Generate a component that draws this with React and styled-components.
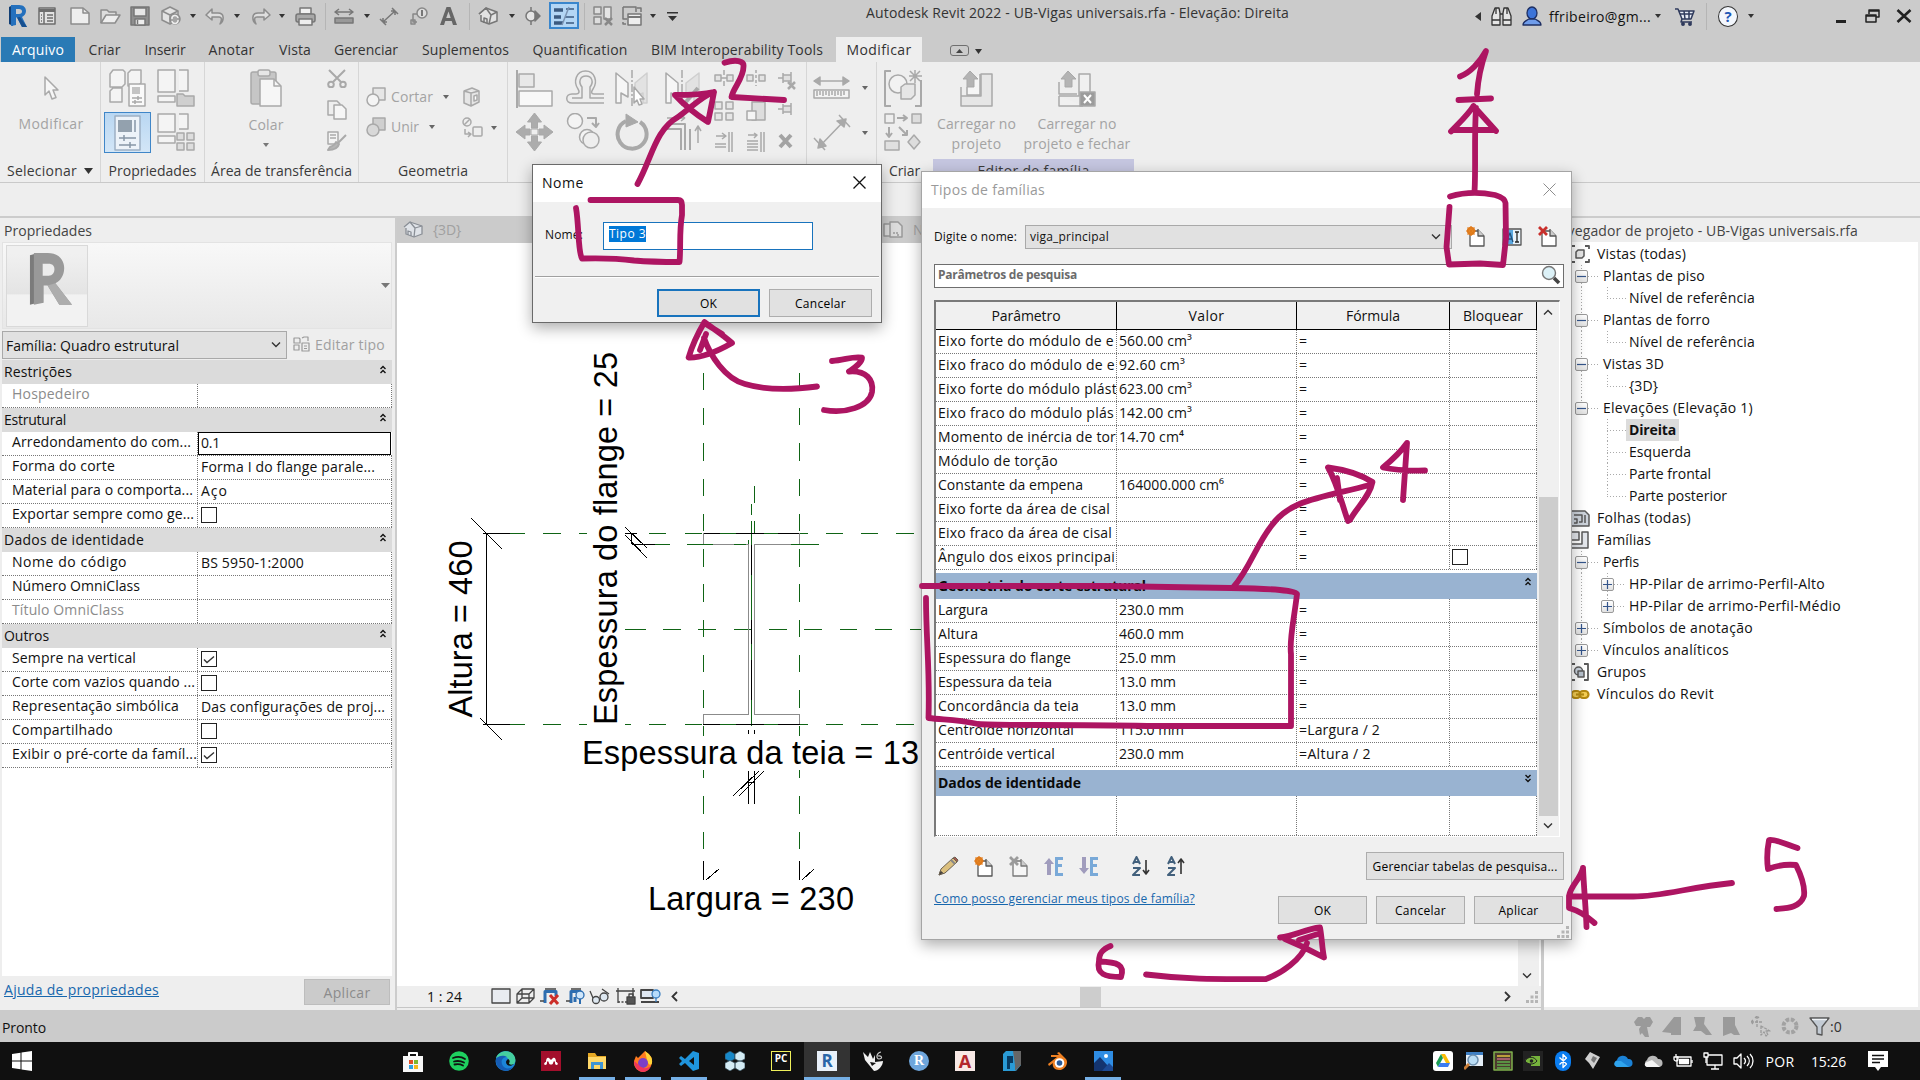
import React, { useLayoutEffect, useRef, useState } from 'react';
import styled, { createGlobalStyle, css } from 'styled-components';

const UI = '"Open Sans", "Noto Sans", "Liberation Sans", sans-serif';

const Global = createGlobalStyle`
  * { box-sizing: border-box; }
  html, body { margin: 0; padding: 0; background: #cbcbcb; }
  body { width: 1920px; height: 1080px; overflow: hidden; font-family: ${UI}; font-size: 14px; color: #111; }
  svg { display: block; flex: none; }
`;

/* ---------- text that tracks to a known column width ---------- */
const Run = styled.span`
  display: inline-block;
  flex: none;
  white-space: nowrap;
`;
function T({ w, children, className }) {
  const ref = useRef(null);
  const [ls, setLs] = useState(0);
  useLayoutEffect(() => {
    if (!w) return;
    const natural = ref.current.getBoundingClientRect().width;
    setLs((w + 1 - natural) / String(children).length);
  }, [w, children]);
  return <Run ref={ref} className={className} style={ls ? { letterSpacing: ls } : undefined}>{children}</Run>;
}

/* ---------- icons ---------- */
const g1 = '#8d8d8d';
const g2 = '#a9a9a9';
const dark = '#5a5a5a';
const S = ({ w, h, children, sw = 1.5, c = g1, f = 'none' }) => (
  <svg width={w} height={h} viewBox={`0 0 ${w} ${h}`} fill={f} stroke={c} strokeWidth={sw} strokeLinejoin="round">{children}</svg>
);
const Tri = ({ w = 6, h = 4, c = '#333' }) => (
  <svg width={w} height={h} viewBox="0 0 6 4" preserveAspectRatio="none"><path d="M0 0h6L3 4z" fill={c} /></svg>
);

const I = {
  revit: <S w={19} h={22} sw={0}><path d="M1 2l4-2v21l-4-2z" fill="#123f75" /><path d="M3 0h8c5 0 7 3 7 6s-2 5-4 6l5 10h-5L9 12.500H8V20l-5 1z" fill="#2470bd" /><path d="M8 4h3c2 0 3 1 3 2.500S13 9 11 9H8z" fill="#cbcbcb" /><path d="M9 12.500l3-.5 7 10h-5z" fill="#174f8f" /></S>,
  win: <S w={18} h={18} c="#6d6d6d"><rect x="1" y="1" width="16" height="16" fill="#e2e2e2" /><path d="M1 3.500h16" strokeWidth="3" /><path d="M6 4v13M9 8h6M9 11h6M9 14h6M3 8h1M3 11h1M3 14h1" /></S>,
  newdoc: <S w={20} h={18}><path d="M1 1h12l6 5v11H1z" fill="#eee" /><path d="M13 1v5h6" /></S>,
  open: <S w={21} h={16}><path d="M1 15V2h6l2 2h7v3" fill="#ddd" /><path d="M1 15L6 7h14l-5 8z" fill="#eee" /></S>,
  save: <S w={20} h={20} c="#777"><path d="M1 1h18v18H1z" fill="#8f8f8f" /><rect x="4" y="2" width="12" height="8" fill="#e6e6e6" /><rect x="5" y="13" width="10" height="6" fill="#eee" /><path d="M7.500 14v4" /></S>,
  cloud: <S w={21} h={20}><path d="M2 5l8-4 8 4v9l-8 4-8-4z" fill="#e3e3e3" /><path d="M2 5l8 4 8-4M10 9v9" /><circle cx="15" cy="13" r="5" fill="#a5a5a5" /><path d="M12 13a3 3 0 0 1 6-1M18 14a3 3 0 0 1-6 1" stroke="#eee" /></S>,
  undo: <S w={20} h={17}><path d="M7 1L1 7l6 5V9h7c3 0 3 3 1 7 4-3 5-11-2-11H7z" fill="#dedede" /></S>,
  redo: <S w={20} h={17}><path d="M13 1l6 6-6 5V9H6c-3 0-3 3-1 7-4-3-5-11 2-11h6z" fill="#dedede" /></S>,
  print: <S w={21} h={19} c="#777"><rect x="5" y="1" width="11" height="6" fill="#f0f0f0" /><rect x="1" y="7" width="19" height="8" rx="2" fill="#a8a8a8" /><rect x="4" y="12" width="13" height="6" fill="#eee" /></S>,
  meas: <S w={20} h={16} c="#777"><path d="M2 4h16M5 1L1 4l4 3M15 1l4 3-4 3" /><rect x="1" y="10" width="18" height="5" fill="#999" /></S>,
  dim: <S w={20} h={19} c="#777"><path d="M4 15L16 4M1 12l6 6M13 1l6 6M4 11v4h4M12 4h4v4" /></S>,
  tag: <S w={18} h={18} c="#888"><circle cx="12" cy="6" r="5" fill="#ddd" /><path d="M7 7H3v8h4M1 13h4v4H1z" /><path d="M12 3v6" stroke="#555" /></S>,
  letterA: <S w={17} h={18} sw={0}><path d="M0 18L6.500 0h4L17 18h-4l-1.300-4H5.300L4 18zm6.200-7h4.500L8.500 4.500z" fill="#666" fillRule="evenodd" /></S>,
  house: <S w={20} h={18} c="#777"><path d="M1 7l7-6 11 4v9l-8 3-8-3V8" fill="#e2e2e2" /><path d="M1 7l7-6 5 7-2 9M13 8l6-3M6 16v-5l3 1v4" /></S>,
  section: <S w={17} h={18} c="#777"><circle cx="7" cy="9" r="5" fill="#e4e4e4" /><path d="M11 4l5 5-5 5zM7 0v4M7 14v4" fill="#777" /></S>,
  thin: <S w={22} h={20} c="#3b5a80"><path d="M1 4h9M1 11h7M1 17h9" strokeWidth="3.500" /><path d="M13 3h8M12 11h9M13 17h8" /><path d="M16 1L9 19" stroke="#7a93b3" /></S>,
  closeh: <S w={21} h={20} c="#888"><rect x="1" y="1" width="7" height="7" fill="#ddd" /><rect x="11" y="1" width="7" height="12" fill="#e4e4e4" /><rect x="1" y="11" width="7" height="7" fill="#ddd" /><path d="M12 12l7 7M19 12l-7 7" strokeWidth="2.500" /></S>,
  switchw: <S w={21} h={20} c="#777"><path d="M1 1h13v5M1 1v12h4" /><rect x="6" y="8" width="13" height="11" fill="#eee" /><path d="M6 11h13" strokeWidth="2" /><path d="M15 2h4v4M1 16v2h3" /></S>,
  custom: <S w={11} h={9} sw={0}><path d="M0 0h11v1.500H0zM1 4h9L5.500 9z" fill="#333" /></S>,
  binoc: <S w={21} h={19} c="#333" sw={1.300}><path d="M4 1h4l1 5v12H1V9zM13 1h4l3 8v9h-8V6z" fill="#e5e5e5" /><path d="M9 7h3M1 13h8M12 13h8M5 1v6M16 1v6" /></S>,
  user: <S w={20} h={20} c="#1e2f63" sw={1.300}><ellipse cx="10" cy="7" rx="5" ry="6" fill="#3d74d8" /><path d="M1 19c0-4 3-4 6-6h6c3 2 6 2 6 6z" fill="#6f9cea" /></S>,
  cart: <S w={21} h={19} c="#2f3a5c"><path d="M1 2h3l4 10h9l3-8H5" fill="#e8ecf6" /><path d="M8 12l-1 3h11M6 7h13M10 4l1 8M15 4v8" /><circle cx="9" cy="17" r="1.200" fill="#2f3a5c" /><circle cx="16" cy="17" r="1.200" fill="#2f3a5c" /></S>,
  restore: <S w={15} h={14} c="#222"><path d="M4 5V1h10v7h-3M4 2h10" /><path d="M1 6h10v7H1zM1 7h10" /></S>,
  close: <S w={16} h={14} c="#222" sw={2.600}><path d="M1.500 1l13 12M14.500 1l-13 12" /></S>,
  cursor: <S w={17} h={27} c={g2}><path d="M2 2v18l4-4 3 8 4-1.500-3-7.500h5z" fill="#f6f6f6" /></S>,
  cubes: <S w={38} h={38} c={g2}><path d="M2 5l3-4h10l2 2v12l-3 3H2zM20 4l3-3h10v13l-3 3H20zM2 22l3-3h9v14H2z" fill="#f4f4f4" /><rect x="21" y="15" width="16" height="22" fill="#fafafa" /><rect x="24" y="18" width="8" height="7" fill="#c4c4c4" stroke="none" /><path d="M24 29h10M24 33h10M30 27v4M27 31v4" /></S>,
  typefold: <S w={38} h={38} c={g2}><path d="M1 1h17v22H1zM22 1h9v21h-9M1 27h17v6H1z" fill="#f4f4f4" /><path d="M20 25h6l2 2h9v10H20z" fill="#cfcfcf" /></S>,
  proppal: <S w={27} h={36} c="#9db0c3"><rect x="1" y="1" width="25" height="34" fill="#edf3f9" /><rect x="4" y="5" width="14" height="12" fill="#93a1ae" stroke="none" /><path d="M21 5v12M5 23h17M5 30h17M10 20v6M16 27v6" stroke="#8797a6" /></S>,
  typegrid: <S w={38} h={38} c={g2}><path d="M1 1h17v18H1zM22 1h9v15h-9M1 23h17v7H1z" fill="#f4f4f4" /><path d="M20 20h7v7h-7zM30 20h7v7h-7zM20 30h7v7h-7zM30 30h7v7h-7z" fill="#ddd" /></S>,
  paste: <S w={33} h={38} c={g2}><rect x="1" y="3" width="25" height="32" rx="2" fill="#c6c6c6" /><rect x="8" y="1" width="12" height="6" rx="2" fill="#e6e6e6" /><path d="M10 10h14l7 7v20H10z" fill="#f6f6f6" /><path d="M24 10v7h7" /></S>,
  scissors: <S w={20} h={19} c={g2} sw={2}><path d="M2 1l12 12M18 1L6 13" /><circle cx="4" cy="15.500" r="2.800" /><circle cx="16" cy="15.500" r="2.800" /></S>,
  copydoc: <S w={20} h={20} c={g2}><path d="M1 1h9l3 3v11H1z" fill="#eee" /><path d="M7 5h8l4 4v10H7z" fill="#f6f6f6" /></S>,
  brush: <S w={20} h={20} c={g2}><path d="M1 1h10v12H1zM3 4h6M3 7h6" fill="#f4f4f4" /><path d="M19 4l-8 8M1 19c6 0 10-2 11-6l-3-2c-1 3-3 4-6 5z" strokeWidth="2" fill="#b5b5b5" /></S>,
  cutg: <S w={20} h={20} c={g2}><rect x="7" y="1" width="12" height="12" fill="#e6e6e6" /><circle cx="7" cy="13" r="6" fill="#f4f4f4" /></S>,
  joing: <S w={20} h={20} c={g2}><rect x="7" y="1" width="12" height="12" fill="#cfcfcf" /><circle cx="7" cy="13" r="6" fill="#d8d8d8" /></S>,
  solid: <S w={20} h={20} c={g2}><path d="M2 4l7 2 8-2v11l-8 4-7-3zM9 6v13M2 4l8-3 7 3" fill="#e6e6e6" /><path d="M12 9l3-1v5l-3 1z" fill="#fff" /></S>,
  geo2: <S w={21} h={21} c={g2}><circle cx="5" cy="5" r="4" /><path d="M2 8l6-6M3 12v5h5M6 15l3 2-3 3" /><rect x="11" y="10" width="9" height="9" rx="1" fill="#eee" /></S>,
  align: <S w={38} h={38} c={g2}><path d="M1 0v38" strokeWidth="2" /><rect x="3" y="4" width="15" height="13" fill="#e8e8e8" /><rect x="3" y="21" width="33" height="15" fill="#f8f8f8" /></S>,
  offset: <S w={39} h={34} c={g2}><path d="M38 24H28c-3 0-3-2-1-5 5-7 2-18-7.500-18S7 12 12 19c2 3 1 5-2 5H6c-7 0-7 9 0 9h32" strokeWidth="1.500" /><path d="M38 28H24V17c4-5 2-11-4-11s-8 6-4 11v11H6" /></S>,
  mirror: <S w={36} h={38} c={g2}><path d="M1 3v30h5V23l7 4V13z" fill="#f6f6f6" /><path d="M32 3v30h-4V23l-8 4V13z" fill="#e2e2e2" stroke="#cfcfcf" /><path d="M17 0v38" strokeDasharray="8 2 2 2" /><path d="M19 17v16l3-3 2 5 3-1-2-5h4z" fill="#fff" /></S>,
  mirror2: <S w={36} h={38} c={g2}><path d="M1 3v30h5V23l7 4V13z" fill="#f6f6f6" /><path d="M34 3v30h-5V23l-8 4V13z" fill="#e2e2e2" stroke="#cfcfcf" /><path d="M17 0v38" strokeDasharray="8 2 2 2" /><path d="M33 18L20 33" strokeWidth="4" /></S>,
  move: <S w={37} h={38} c={g2} sw={1} f="#acacac"><path d="M18.500 0l7 9h-4v6h-6V9h-4zM18.500 38l7-9h-4v-6h-6v6h-4zM0 19l9-7v4h5v6H9v4zM37 19l-9-7v4h-5v6h5v4z" /><rect x="15" y="16" width="7" height="6" fill="#eee" /></S>,
  copy: <S w={35} h={37} c={g2}><circle cx="9" cy="8" r="7.500" fill="#f4f4f4" /><circle cx="21" cy="24" r="7.500" fill="#f4f4f4" /><circle cx="25" cy="27" r="8" fill="#eee" /><path d="M21 5h9v8M26 10l4 4 3-4" strokeWidth="2" /></S>,
  rotate: <S w={35} h={38} c={g2} sw={4}><path d="M11 8A14.500 14.500 0 1 0 25 9" /><path d="M11 1v13l12-5z" fill="#a9a9a9" strokeWidth="1" /></S>,
  trim: <S w={37} h={38} c={g2}><path d="M2 11h18v26M2 16h14v21M25 16v21" strokeWidth="2" /><path d="M2 5h18M20 5l-4-3M20 5l-4 3M33 30V14M30 18l3-5 3 5" /></S>,
  split: <S w={20} h={16} c={g2}><path d="M1 5h6v6H1zM13 5h6v6h-6zM10 0v5M10 11v5M7 8h6" fill="#e4e4e4" /></S>,
  split2: <S w={20} h={16} c={g2}><path d="M1 5h6v6H1zM13 5h6v6h-6z" fill="#e4e4e4" /><path d="M10 0v16" strokeDasharray="3 2" /></S>,
  unpin: <S w={20} h={20} c={g2}><path d="M1 8h5M6 3v10M6 5h8v6H6M14 2v12" fill="#e0e0e0" /><path d="M11 12l7 7M18 12l-7 7" strokeWidth="2.500" /></S>,
  array: <S w={20} h={20} c={g2}><path d="M1 1h7v7H1zM12 1h7v7h-7zM1 12h7v7H1zM12 12h7v7h-7z" fill="#e6e6e6" /></S>,
  scale: <S w={20} h={20} c={g2}><path d="M6 1h13v18H6z" fill="#ddd" /><rect x="1" y="10" width="9" height="9" fill="#f4f4f4" /></S>,
  pin: <S w={18} h={16} c={g2}><path d="M1 8h5M6 3v10M6 5h8v6H6M14 2v12" fill="#e0e0e0" /></S>,
  trim1: <S w={20} h={20} c={g2}><path d="M2 4h9M8 1l4 3-4 3M1 12h11M1 15h11M15 0v20M18 0v20" /></S>,
  trim2: <S w={20} h={20} c={g2}><path d="M2 3h9M8 1l3 2-3 3M1 9h11M1 12h11M1 15h11M1 18h11M15 0v20M18 0v20" /></S>,
  del: <S w={18} h={18} c="#a3a3a3" sw={4}><path d="M3 3l11 12M14 3L3 15" /></S>,
  ruler: <S w={37} h={24} c={g2}><path d="M2 5h33M7 1L1 5l6 4zM30 1l6 4-6 4z" fill={g2} /><rect x="1" y="14" width="35" height="8" fill="#f4f4f4" /><path d="M4 15v5M7 15v4M10 15v5M13 15v4M16 15v5M19 15v4M22 15v5M25 15v4M28 15v5M31 15v4" /></S>,
  aligned: <S w={38} h={38} c={g2}><path d="M6 33L32 6M1 24l11 12M26 1l11 12" /><path d="M5 34l2-9 6 7zM33 5l-9 2 7 6z" fill={g2} /></S>,
  group: <S w={38} h={37} c={g2}><path d="M7 1H1v35h6M31 36h6V10" strokeWidth="2" /><circle cx="14" cy="14" r="9" fill="#f2f2f2" /><path d="M17 17l4-3h10v11l-4 4H17z" fill="#e6e6e6" /><path d="M31 0v13M25 6h13M26 1l10 10M36 1L26 11" /></S>,
  similar: <S w={38} h={38} c={g2}><rect x="1" y="1" width="9" height="9" /><rect x="28" y="1" width="9" height="9" fill="#ddd" /><path d="M13 5h10M19 2l4 3-4 3M5 14v10M2 20l3 4 3-4M15 14l8 8M23 17v5h-5" strokeWidth="2" /><rect x="1" y="28" width="14" height="9" fill="#e0e0e0" /><path d="M30 22l6 7-6 7-6-7z" fill="#ddd" /></S>,
  load: <S w={33} h={37} c={g2}><path d="M1 17v19h31V4H21v22H1" fill="#e6e6e6" /><path d="M7 17v8h13V4" fill="#f6f6f6" /><path d="M10 1l8 8h-4v8h-7V9H3z" fill="#b4b4b4" strokeWidth="1" /></S>,
  loadx: <S w={39} h={37} c={g2}><path d="M1 26v10h24M32 22V4H21v22H1" fill="#f0f0f0" /><path d="M1 12v12h18" /><path d="M10 1l8 8h-4v8h-7V9H3z" fill="#b4b4b4" strokeWidth="1" /><rect x="22" y="22" width="15" height="14" fill="#9c9c9c" /><path d="M26 25l7 8M33 25l-7 8" stroke="#fff" strokeWidth="2" /></S>,
  dnew: <S w={20} h={21} c="#555" sw={1.300}><path d="M4 5h9l5 5v10H4z" fill="#fff" /><path d="M12 3v7h6" fill="#ccc" /><circle cx="5" cy="5" r="3.200" fill="#ffc34a" stroke="#e07b1c" strokeWidth="2" /><path d="M5 0v10M0 5h10M1.500 1.500l7 7M8.500 1.500l-7 7" stroke="#e07b1c" strokeWidth="1.200" /></S>,
  ai: <S w={20} h={18} c="#555" sw={1.300}><rect x="1" y="1" width="18" height="16" fill="#e8f2fb" /><rect x="1" y="2" width="10" height="14" fill="#59a7e0" stroke="none" /><path d="M4 14l4-9 3 9M5 11h5" stroke="#22507c" /><path d="M15 4v10M13 4h4M13 14h4" stroke="#222" /></S>,
  ddel: <S w={20} h={21} c="#555" sw={1.300}><path d="M4 5h9l5 5v10H4z" fill="#fff" /><path d="M12 3v7h6" fill="#ccc" /><path d="M1 1l8 8M9 1L1 9" stroke="#c9302c" strokeWidth="2.800" /></S>,
  ddelg: <S w={20} h={21} c="#777" sw={1.300}><path d="M4 5h9l5 5v10H4z" fill="#f6f6f6" /><path d="M12 3v7h6" fill="#ccc" /><path d="M1 1l8 8M9 1L1 9" stroke="#9b9b9b" strokeWidth="2.800" /></S>,
  mag: <S w={20} h={20} c="#777" sw={1.400}><circle cx="8" cy="8" r="6.500" fill="#dcf1f7" /><path d="M13 13l5 5" stroke="#444" strokeWidth="3.500" /></S>,
  pencil: <S w={21} h={20} c="#6b6152" sw={1}><path d="M1 19l2-6L15 2l4 4L7 17z" fill="#dcc07e" /><path d="M1 19l1.500-4 2.500 2z" fill="#333" /><path d="M15 2l2-1 3 3-1 2z" fill="#a65a52" /><path d="M13 4l4 4" stroke="#888" strokeWidth="2" /></S>,
  up: <S w={20} h={20} sw={0}><path d="M5 2l5 6H7v11H3V8H0z" fill="#a09cbd" /><path d="M11 1h8v3h-5v4h4v3h-4v6h5v3h-8z" fill="#79a9d8" /></S>,
  down: <S w={20} h={20} sw={0}><path d="M5 18l5-6H7V1H3v11H0z" fill="#a09cbd" /><path d="M11 1h8v3h-5v4h4v3h-4v6h5v3h-8z" fill="#79a9d8" /></S>,
  az: <S w={18} h={20} c="#42607c" sw={2}><path d="M1 8L4.500 1 8 8M2.500 6h4M1 12h7l-7 7h7" /><path d="M14 4v14M11 14l3 4 3-4" stroke="#333" strokeWidth="1.600" /></S>,
  za: <S w={18} h={20} c="#42607c" sw={2}><path d="M1 8L4.500 1 8 8M2.500 6h4M1 12h7l-7 7h7" /><path d="M14 18V3M11 7l3-4 3 4" stroke="#333" strokeWidth="1.600" /></S>,
  edit: <S w={17} h={16} c="#999" sw={1.200}><path d="M1 2h5l1 1v4H1zM9 2l2-1h4v4M1 9h5v5H1z" /><rect x="9" y="7" width="7" height="8" /><path d="M11 10h3M11 12.500h3" /></S>,
  tviews: <S w={20} h={18} c={dark}><path d="M5 1H1v16h4M15 1h4v3M19 14v3h-4" strokeWidth="1.800" /><path d="M6 7l2-2h6v6l-2 2H6z" fill="#e8e8e8" /></S>,
  tsheet: <S w={20} h={17} c={dark}><path d="M1 1h14l4 4v11H1z" fill="#cdd3db" /><path d="M4 5h8v7H9M4 9h3v4H4M15 5v8" /></S>,
  tfam: <S w={19} h={18} c={dark}><path d="M1 1h8v8H1zM12 1h6v16H1v-4h11z" fill="#e4e7ec" /></S>,
  tgroup: <S w={19} h={18} c={dark}><path d="M5 1H1v16h4M14 1h4v16h-4" strokeWidth="1.800" /><circle cx="8.500" cy="8" r="4" fill="#ccd5e0" /><path d="M8 8h6v6H8z" fill="#b8c2ce" /></S>,
  tlink: <S w={20} h={11} c="#b58a12" sw={2.200}><rect x="1.500" y="2" width="9" height="7" rx="3.500" fill="#f5cf55" /><rect x="9.500" y="2" width="9" height="7" rx="3.500" fill="#f5cf55" /><path d="M6 5.500h8" /></S>,
  vhouse: <S w={20} h={17} c="#8a8f96" sw={1.300}><path d="M1 6l6-5 12 4v8l-8 3-8-3V7" fill="#dfe3e8" /><path d="M7 1l5 6-1 9M12 7l7-2M5 14v-4l3 1v4" /></S>,
  vsheet: <S w={20} h={19} c="#999"><path d="M1 4h6v12H1zM7 2h8l4 4v11H7z" fill="#dcdcdc" /><path d="M10 13h5v4" strokeDasharray="2 1" /></S>,
  v1: <S w={20} h={17} c="#444" sw={1.300}><rect x="1" y="1" width="18" height="14" fill="#e9ecf1" /></S>,
  v2: <S w={19} h={17} c="#444" sw={1.300}><path d="M1 6h12v9H1zM1 6l5-5h12v9l-5 5M13 6l5-5M6 1v9h12M1 15l5-5" /></S>,
  v3: <S w={21} h={17} c="#2d6db0" sw={3}><path d="M6 15V3.500h11V8" /><path d="M1 13h4M6 1h11" stroke="#444" strokeWidth="1.300" /><path d="M11 7l8 9M19 7l-8 9" stroke="#cc2f2a" strokeWidth="3" /></S>,
  v4: <S w={20} h={17} c="#2d6db0" sw={3}><path d="M6 15V3.500h10M10 14V9" /><path d="M1 13h4M6 1h10" stroke="#444" strokeWidth="1.300" /><circle cx="15" cy="7" r="4" fill="#cfe6fb" strokeWidth="1.300" /><path d="M15 11v5" strokeWidth="2" /></S>,
  v5: <S w={21} h={17} c="#444" sw={1.300}><path d="M1 3l3 7M20 6l-7-5" /><circle cx="7" cy="12" r="3.500" fill="#dde7f0" /><circle cx="15" cy="9" r="4" fill="#dde7f0" /></S>,
  v6: <S w={21} h={17} c="#444" sw={1.300}><path d="M1 3h19M3 0v15M18 0v8" /><path d="M3 14h9" strokeDasharray="2 1.500" /><rect x="12" y="9" width="8" height="7" fill="#555" /><path d="M14 9V6h4v3" /></S>,
  v7: <S w={21} h={17} c="#444" sw={1.300}><path d="M1 2h12v8H1zM1 14h18" fill="#dfe7f1" strokeWidth="1.800" /><circle cx="16" cy="6" r="4" fill="#b7dcfb" stroke="#3b7fc0" /><path d="M16 10v4" stroke="#3b7fc0" /></S>,
  s1: <S w={20} h={21} sw={0}><path d="M1 6l4-5h4l2 2 2-2h4l3 5-3 5h-3l2 10h-4l-3-4-2 2-1-6 2-3H3z" fill="#9a9a9a" /></S>,
  s2: <S w={20} h={21} sw={0}><path d="M0 16L12 1h7v18H9V17z" fill="#9a9a9a" /></S>,
  s3: <S w={20} h={21} sw={0}><path d="M2 1h11l-1 7 8 11h-6l-5-4H1l3-5z" fill="#9a9a9a" /></S>,
  s4: <S w={20} h={21} sw={0}><path d="M2 1h12v8l5 10h-6l-3-2-8 3z" fill="#9a9a9a" /></S>,
  s5: <S w={21} h={21} c="#9a9a9a" sw={1.300}><path d="M6 0v12M0 6h12M4 2l2-2 2 2M2 4L0 6l2 2M10 10v9l3-3 2 4 2-1-2-4h4z" strokeDasharray="3 1" /></S>,
  s6: <S w={18} h={18} c="#a2a2a2" sw={4}><circle cx="9" cy="9" r="6.500" strokeDasharray="3.600 1.500" /></S>,
  funnel: <S w={21} h={20} c="#555" sw={1.300}><path d="M1 2h19l-7 9v8l-5-1v-7z" fill="#c3cbd4" /><path d="M3 3.500h15" stroke="#f1f4f7" /></S>,
};

const taskIcons = {
  store: <S w={20} h={21} sw={0}><path d="M6 6V2h8v4" fill="none" stroke="#fff" strokeWidth="2" /><path d="M0 5h20v16H0z" fill="#f7f7f7" /><path d="M6 9h4v4H6z" fill="#e14f26" /><path d="M11 9h4v4h-4z" fill="#7db72f" /><path d="M6 14h4v4H6z" fill="#2fa0e0" /><path d="M11 14h4v4h-4z" fill="#f5b81c" /></S>,
  spotify: <S w={20} h={20} sw={0}><circle cx="10" cy="10" r="9.800" fill="#1ed05f" /><path d="M4 7c4-1.500 9-1 12 1M5 10.500c4-1 7-.500 10 1M5.500 13.500c3-.700 6-.4 8.500 1" fill="none" stroke="#111" strokeWidth="1.800" strokeLinecap="round" /></S>,
  edge: <S w={21} h={20} sw={0}><circle cx="10.500" cy="10" r="10" fill="#1b84d8" /><path d="M1 7C3 1 10-1 15 1c5 2 7 8 4 12-3 2-7 1-5-2 1-4-5-8-13-4z" fill="#45cfa0" /><path d="M1 8c3-4 8-4 11-2-5 0-7 5-4 9 2 3 6 3 10 1-5 7-18 4-17-8z" fill="#155cb4" /><path d="M13 8c2 1 2 3 1 4 0 2 3 2 5 1-3 3-8 2-8-2 0-1 1-2 2-3z" fill="#101010" /></S>,
  mendeley: <S w={20} h={20} sw={0}><rect width="20" height="20" fill="#a30f2c" /><path d="M4 14c-2-1 0-3 1-3 0-3 1-5 3-4l2 2 2-2c2-1 3 1 3 4 1 0 3 2 1 3-2 0-2-1-2-3l-1-1-1 2c0 2-4 2-4 0l-1-2-1 1c0 2 0 3-2 3z" fill="#fff" /></S>,
  explorer: <S w={20} h={18} sw={0}><path d="M1 1h7l2 3h9v13H1z" fill="#e5a824" /><path d="M1 5h18v12H1z" fill="#ffd869" /><path d="M4 17v-7h12v7h-3v-4H7v4z" fill="#3f94d4" /></S>,
  firefox: <S w={20} h={21} sw={0}><path d="M12 0c4 3 8 6 7 12-1 5-5 9-9 9S0 17 1 10l2-5 2 2z" fill="#ff7a1f" /><path d="M12 0c4 3 8 6 7 12-1 3-4 2-5-3z" fill="#ffd53a" /><circle cx="10" cy="12" r="5" fill="#7b3fc7" /><path d="M1 10c0 7 5 11 9 11 3 0 7-3 8-6-4 3-9 3-12-1z" fill="#f0355b" /></S>,
  vscode: <S w={20} h={20} sw={0}><path d="M14 0l6 2v16l-6 2L6 12l-4 3-2-2 3-3-3-3 2-2 4 3zm1 6l-5 4 5 4z" fill="#1f95dd" fillRule="evenodd" /></S>,
  cubes3: <S w={20} h={20} c="#2c4450" sw={0.7}><path d="M0 3l5-3 5 3v5l-5 2.500L0 8z" fill="#1889c9" /><path d="M10 3l5-3 5 3v5l-5 2.500L10 8zM0 12l5-2.500 5 2.500v5l-5 3-5-3zM10 12l5-2.500 5 2.500v5l-5 3-5-3z" fill="#d4ecf5" /></S>,
  rhino: <S w={20} h={20} sw={0}><path d="M0 1l5 5 2-5 3 7 2-4v7l8-1c0 5-5 10-9 10L2 9z" fill="#f1f1f1" /><path d="M7 11l6 1-4 3z" fill="#111" /><path d="M18 1c-5 1-5 7-2 7 4 0 3-4-1-3" fill="none" stroke="#ccc" strokeWidth="1.200" /></S>,
  navis: <S w={20} h={20} sw={0}><path d="M2 3l3-3h15v14l-5 6H2z" fill="#2a9bd6" /><path d="M12 0h8v14l-6 6v-6z" fill="#666" /><path d="M6 5h6v7H9v6H6z" fill="#063b63" /></S>,
  blender: <S w={20} h={19} sw={0}><path d="M1 12l9-7H4V3h8L10 1l2-1 7 7c3 4-1 11-7 11-5 0-7-4-6-7l-4 3z" fill="#ee8022" /><circle cx="12.500" cy="11" r="4.800" fill="#fff" /><circle cx="12.500" cy="11" r="2.800" fill="#2a5b99" /></S>,
  photos: <S w={19} h={20} sw={0}><rect width="19" height="20" fill="#2f8de4" /><path d="M0 20V12l6-6 8 9 5 5z" fill="#14346e" /><path d="M8 20l7-8 4 4v4z" fill="#1d4a94" /><circle cx="12" cy="5" r="2" fill="#fff" /></S>,
  gdrive: <S w={20} h={20} sw={0}><rect width="20" height="20" rx="3" fill="#fff" /><path d="M8 3h4l5 9h-4z" fill="#fbbc05" /><path d="M8 3l2 4-5 9-2-4z" fill="#1a9c52" /><path d="M7 12h10l-2 4H5z" fill="#3c7cf0" /></S>,
  search: <S w={19} h={20} sw={0}><rect x="2" y="1" width="17" height="14" fill="#e5eef7" /><rect x="2" y="1" width="17" height="3" fill="#3e7fc4" /><circle cx="9" cy="9" r="5" fill="#b9dcf5" stroke="#6d8fae" strokeWidth="1.500" /><path d="M5 13l-5 5" stroke="#c87c36" strokeWidth="3" /></S>,
  bars: <S w={20} h={20} sw={0}><rect x="1" y="1" width="18" height="18" fill="#4c3a2e" stroke="#7fb04c" strokeWidth="1.500" /><path d="M4 5h13" stroke="#e0c040" strokeWidth="1.500" /><path d="M4 8h13" stroke="#c06a80" strokeWidth="1.500" /><path d="M4 11h13M4 14h13M4 17h13" stroke="#5fae4c" strokeWidth="1.500" /></S>,
  nvidia: <S w={20} h={20} sw={0}><rect width="20" height="20" fill="#222" /><path d="M8 5h9v10H8z" fill="#76b33c" /><path d="M2 10c3-5 9-5 12 0-3 4-9 4-12 0z" fill="#76b33c" stroke="#222" strokeWidth="1" /><circle cx="8.500" cy="10" r="1.800" fill="#222" /></S>,
  bt: <S w={16} h={20} c="#fff" sw={1.300}><rect width="16" height="20" rx="8" fill="#0a7df0" stroke="none" /><path d="M4.500 6.500l7 6.500-3.500 3.500V3.500L11.500 7l-7 6.500" /></S>,
  pen: <S w={16} h={18} sw={0}><path d="M5 0l10 5-7 12-4-6-4-4z" fill="#cfcfcf" /><path d="M8 4l4 2-3 5-3-3z" fill="#777" /></S>,
  onedrive: <S w={20} h={14} sw={0}><path d="M4 13a4 4 0 0 1 0-7 6 6 0 0 1 11-1 4 4 0 0 1 1 8z" fill="#1b82d6" /><path d="M8 7l8 6H4c-3-1-4-4-1-6z" fill="#2fa4ee" /></S>,
  cloudw: <S w={20} h={14} sw={0}><path d="M4 13a4 4 0 0 1 0-7 6 6 0 0 1 11-1 4 4 0 0 1 1 8z" fill="#b9b9b9" /><path d="M9 6l8 7H4c-3-1-3-4 0-5z" fill="#f5f5f5" /></S>,
  batt: <S w={21} h={16} c="#fff" sw={1.300}><rect x="4" y="4" width="14" height="9" /><rect x="6.500" y="6.500" width="9" height="4" fill="#fff" /><path d="M19 7v3M3 1v3M1 4h4v2a2 2 0 0 1-4 0z" /></S>,
  net: <S w={20} h={18} c="#fff" sw={1.300}><path d="M4 3h15v10H4zM8 17h8M12 13v4" /><path d="M1 1h4v4H1zM3 5v6" fill="#101010" /></S>,
  vol: <S w={21} h={16} c="#fff" sw={1.300}><path d="M1 5h3l4-4v14l-4-4H1zM11 5c2 2 2 4 0 6M14 3c3 3 3 7 0 10M17 1c4 4 4 10 0 14" /></S>,
  notif: <S w={20} h={20} sw={0}><path d="M0 0h20v16h-7l-3 4-3-4H0z" fill="#fff" /><path d="M4 4.500h12M4 8h12M4 11.500h8" stroke="#111" strokeWidth="1.500" /></S>,
  start: <S w={20} h={20} sw={0}><path d="M0 3l8.500-1.300v7.800H0zM9.500 1.500L20 0v9.500H9.500zM0 10.500h8.500v7.800L0 17zM9.500 10.500H20V20L9.500 18.500z" fill="#fff" /></S>,
};

/* ---------- frame ---------- */
const Screen = styled.div`
  position: relative; width: 1920px; height: 1080px; overflow: hidden;
  display: flex; flex-direction: column; background: #eee;
`;
const TitleBar = styled.div`height: 37px; flex: none; background: #cbcbcb; display: flex; align-items: flex-start;`;
const Slot = styled.div`flex: none; margin-left: ${p => p.$gap || 0}px; height: 32px; display: flex; align-items: center;`;
const Split = styled.div`flex: none; margin: 3px 0 0 ${p => p.$gap}px; width: 1px; height: 27px; background: #b5b5b5;`;
const ThinBtn = styled.div`
  flex: none; margin: 2px 0 0 8px; width: 30px; height: 27px; background: #b3d6f5; border: 2px solid #3a86cc;
  display: flex; align-items: center; justify-content: center;
`;
const WinTitle = styled.div`flex: none; height: 26px; line-height: 26px; margin-left: ${p => p.$gap}px; color: #333;`;
const HelpDot = styled.div`
  flex: none; width: 20px; height: 21px; border: 1.500px solid #333; border-radius: 50%; background: #f3f7fd;
  color: #1f57b5; font-weight: 700; font-size: 15px; line-height: 18px; text-align: center;
`;

const TabBar = styled.div`height: 25px; flex: none; background: #cbcbcb; display: flex; padding-left: 1px;`;
const Tab = styled.div`
  flex: none; width: ${p => p.$w}px; display: flex; align-items: center; justify-content: center; padding-bottom: 1px;
  color: #333;
  ${p => p.$file && css`background: #2a7ab5; color: #fff;`}
  ${p => p.$active && css`background: #eee;`}
`;
const TabToggle = styled.div`
  width: 19px; height: 11px; border: 1.500px solid #6f6f6f; border-radius: 3px; margin: 8px 6px 0 28px; display: flex;
  align-items: center; justify-content: center;
`;
const TabArrow = styled.div`padding-top: 12px;`;
const Ribbon = styled.div`height: 121px; flex: none; background: #eee; border-bottom: 1px solid #c9c9c9; display: flex;`;
const Panel = styled.div`
  flex: none; width: ${p => p.$w}px; border-right: 1px solid ${p => (p.$open ? 'transparent' : '#d6d6d6')};
  display: flex; flex-direction: column;
`;
const PanelBody = styled.div`height: 97px; display: flex; padding: ${p => p.$pad || '7px 0 0'};`;
const PanelName = styled.div`
  height: 23px; display: flex; align-items: center; justify-content: center; gap: 7px; color: #3a3a3a;
  background: ${p => p.$bg || 'transparent'};
`;
const Col = styled.div`display: flex; flex-direction: column; align-items: ${p => p.$align || 'center'}; flex: none; width: ${p => p.$w}px; gap: ${p => p.$gap || 0}px; padding-top: ${p => p.$top || 0}px;`;
const Dim = styled.div`color: #a3a3a3; line-height: 20px; white-space: nowrap; display: flex; align-items: center; gap: ${p => p.$gap || 0}px;`;
const Lines = styled.div`color: #a3a3a3; line-height: 20px; display: flex; flex-direction: column; align-items: center;`;
const IconGrid = styled.div`display: grid; grid-template-columns: repeat(${p => p.$n}, ${p => p.$c}px); grid-auto-rows: ${p => p.$r}px; flex: none;`;
const PalBtn = styled.div`
  width: 47px; height: 41px; margin: -1px 0 0 -4px; border: 1px solid #3f86c8; display: flex; align-items: center; justify-content: center;
  background: linear-gradient(#b9d7f2, #d3e6f7);
`;
const Options = styled.div`height: 33px; flex: none; background: #eee;`;

/* ---------- body ---------- */
const Body = styled.div`height: 794px; flex: none; display: flex; background: #eee;`;
const Props = styled.div`width: 395px; flex: none; display: flex; flex-direction: column; border-top: 2px solid #ccc; padding: 0 3px 0 2px;`;
const PalHead = styled.div`height: 24px; flex: none; line-height: 25px; color: #444; padding-left: ${p => p.$pad}px;`;
const TypeBox = styled.div`
  height: 87px; flex: none; border: 1px solid #e3e3e3; background: linear-gradient(#f8f8f8, #e8e8e8);
  display: flex; align-items: center; justify-content: space-between; padding: 0 1px 0 3px;
`;
const Thumb = styled.div`
  width: 82px; height: 82px; border: 1px solid #d9d9d9; display: flex; justify-content: center; padding: 7px 0 0 7px;
  background: linear-gradient(#f0f0f0 0 10%, #e4e4e4 60%, #f2f2f2 61%);
`;
const FamRow = styled.div`height: 31px; flex: none; display: flex; align-items: flex-start; padding-top: 2px;`;
const FamCombo = styled.div`
  width: 285px; height: 28px; border: 1px solid #a9a9a9; background: #e1e1e1; display: flex; align-items: center;
  justify-content: space-between; padding: 0 5px 0 3px;
`;
const EditType = styled.div`height: 26px; margin-left: 6px; display: flex; align-items: center; gap: 5px; color: #a0a0a0;`;
const Grid = styled.div`height: 616px; flex: none; background: #fff; overflow: hidden;`;
const GHead = styled.div`
  height: 24px; background: #dbdbdb; display: flex; justify-content: space-between; align-items: center; padding: 0 6px 1px 2px;
  & > svg { margin-bottom: 5px; }
`;
const GRow = styled.div`height: 24px; display: flex; border-bottom: 1px dotted #777; color: ${p => (p.$off ? '#8b8b8b' : '#111')};`;
const GName = styled.div`width: 196px; border-right: 1px dotted #777; padding-left: 10px; line-height: 20px; overflow: hidden;`;
const GVal = styled.div`
  flex: 1; padding: 0 0 1px 3px; line-height: 20px; display: flex; align-items: center; border-right: 1px dotted #777;
  ${p => p.$edit && css`border: 1px solid #000; padding: 0 0 1px 2px; margin-right: 1px;`}
`;
const Check = styled.div`width: 16px; height: 16px; border: 1px solid #222; background: #fff; margin-top: ${p => p.$mt || 0}px;`;
const HelpBar = styled.div`flex: 1; display: flex; justify-content: space-between; padding: 3px 2px 0 2px;`;
const Link = styled.div`color: #1767ad; line-height: 22px; & > span { text-decoration: underline; }`;
const ApplyOff = styled.div`width: 86px; height: 26px; background: #cbcbcb; border: 1px solid #bdbdbd; color: #8c8c8c; display: flex; align-items: center; justify-content: center;`;

const Center = styled.div`width: 1149px; flex: none; display: flex; flex-direction: column; border-left: 2px solid #ccc; border-right: 3px solid #ccc;`;
const DocTabs = styled.div`height: 27px; flex: none; background: #cbcbcb; display: flex; align-items: center; color: #a0a0a0; padding-left: 6px;`;
const DocTab = styled.div`display: flex; align-items: center; gap: 10px; width: ${p => p.$w}px; overflow: hidden;`;
const CanvasRow = styled.div`height: 743px; flex: none; display: flex; background: #fff;`;
const VScroll = styled.div`width: 21px; background: #efefef; display: flex; align-items: flex-end; justify-content: center; padding: 0 3px 7px 0;`;
const ViewBar = styled.div`height: 22px; flex: none; background: #eee; border-bottom: 1px solid #c6c6c6; display: flex; align-items: center; padding-left: 30px;`;
const ViewIcons = styled.div`display: flex; gap: 4.500px; margin-left: 29px; align-items: center; width: 180px;`;
const HThumb = styled.div`width: 21px; height: 20px; background: #cdcdcd; margin-left: 402px;`;

const Browser = styled.div`flex: 1; border-top: 2px solid #ccc; display: flex; flex-direction: column; padding: 0 2px 3px 0; background: #eee;`;
const Tree = styled.div`flex: 1; background: #fff; padding: 1px 0 0 2px;`;
const TRow = styled.div`height: 22px; display: flex; align-items: center;`;
const Rail = styled.div`
  flex: none; align-self: flex-start; width: 1px; margin: 0 -1px 0 ${p => p.$ml}px; height: ${p => (p.$run === 'end' ? 11 : 22)}px;
  background: ${p => (p.$run ? 'repeating-linear-gradient(#aaa 0 1px, transparent 1px 3px)' : 'transparent')};
`;
const Dash = styled.div`height: 1px; width: ${p => p.$w}px; background: repeating-linear-gradient(90deg, #aaa 0 1px, transparent 1px 3px); flex: none;`;
const Box = styled.div`
  width: 13px; height: 13px; border: 1px solid #9a9a9a; border-radius: 2px; background: linear-gradient(#fff, #e2e2e2);
  margin-left: -6px; flex: none; display: flex; align-items: center; justify-content: center; position: relative;
`;
const TLabel = styled.div`
  line-height: 22px; padding: 0 3px; height: 22px; flex: none;
  ${p => p.$on && css`background: #dcdcdc; font-weight: 700;`}
`;
const IconCell = styled.div`width: 48px; padding-left: 24px; flex: none; display: flex;`;

const Status = styled.div`height: 32px; flex: none; background: #cbcbcb; display: flex; align-items: center; padding: 2px 78px 0 2px; justify-content: space-between;`;
const StatusIcons = styled.div`display: flex; gap: 9.500px; align-items: center; color: #333; margin-top: -2px;`;
const Count = styled.div`margin-left: -9px;`;
const Taskbar = styled.div`height: 38px; flex: none; background: #101010; display: flex; color: #fff;`;
const StartBtn = styled.div`width: 44px; flex: none; display: flex; align-items: center; justify-content: center;`;
const AppStrip = styled.div`display: grid; grid-template-columns: repeat(16, 36px); column-gap: 10px; margin-left: 351px;`;
const AppCell = styled.div`
  height: 38px; display: flex; align-items: center; justify-content: center;
  background: ${p => (p.$act ? '#333' : 'transparent')}; margin: 0 ${p => (p.$act ? -5 : 0)}px;
  border-bottom: 3px solid ${p => (p.$run ? '#76b0e6' : 'transparent')}; padding-top: 3px;
`;
const Badge = styled.div`
  width: 20px; height: 20px; background: ${p => p.$bg}; color: ${p => p.$c}; border: ${p => p.$b || '0'}; border-radius: ${p => p.$r || 0};
  font: 700 ${p => p.$s || 15}px/${p => p.$lh || 20}px ${p => p.$f || UI}; text-align: center;
`;
const Tray = styled.div`display: flex; margin-left: 307px;`;
const TrayCell = styled.div`width: ${p => p.$w || 30}px; flex: none; display: flex; align-items: center; justify-content: center; height: 38px;`;

/* ---------- dialogs ---------- */
const Dialog = styled.div`
  position: absolute; left: ${p => p.$x}px; top: ${p => p.$y}px; width: ${p => p.$w}px; height: ${p => p.$h}px;
  background: #f0f0f0; border: 1px solid ${p => p.$bd}; box-shadow: 0 5px 14px rgba(0,0,0,.32); display: flex; flex-direction: column;
`;
const DTitle = styled.div`
  height: ${p => p.$h}px; flex: none; background: #fff; display: flex; align-items: center; justify-content: space-between;
  padding: 0 ${p => p.$pr}px 2px ${p => p.$pl}px; color: ${p => p.$c};
`;
const Btn = styled.div`
  width: ${p => p.$w}px; height: 28px; flex: none; background: #e1e1e1; border: 1px solid #adadad; display: flex; align-items: center;
  justify-content: center; font-size: 12px; color: #000;
  ${p => p.$def && css`border: 2px solid #1873bd;`}
`;
const NRow = styled.div`display: flex; align-items: center; height: 28px; margin-top: 20px; padding-left: 12px; font-size: 12px; & > span { margin-bottom: 3px; }`;
const NInput = styled.div`width: 210px; height: 28px; border: 1px solid #1873bd; background: #fff; margin-left: 20px; padding: 2px 0 0 5px;`;
const Sel = styled.span`display: inline-block; background: #0078d7; color: #fff; height: 16px; line-height: 16px;`;
const NLine = styled.div`height: 2px; background: #a0a0a0; border-bottom: 1px solid #fff; margin: 26px 2px 0;`;
const NBtns = styled.div`display: flex; gap: 9px; justify-content: flex-end; padding: 11px 9px 0 0;`;

const FRow = styled.div`display: flex; align-items: center; height: 25px; margin: 16px 0 0 12px; font-size: 12px;`;
const FCombo = styled.div`width: 427px; height: 24px; margin-left: 8px; border: 1px solid #a9a9a9; background: #e1e1e1; display: flex; align-items: center; justify-content: space-between; padding: 0 10px 0 4px;`;
const FIcons = styled.div`display: flex; gap: 16px; margin-left: 14px; align-items: center;`;
const Search = styled.div`
  width: 630px; height: 24px; margin: 15px 0 0 12px; border: 1px solid #6e6e6e; background: #fff; display: flex; justify-content: space-between;
  padding: 0 2px 3px 3px; align-items: center; font-size: 12px; font-weight: 700; color: #6b6b6b;
`;
const TableWrap = styled.div`
  width: 626px; height: 537px; margin: 12px 0 0 12px; flex: none; border: 2px solid #7a7a7a; border-width: 2px 1px 1px 2px; border-right-color: #fff; border-bottom-color: #fff;
  display: flex; background: #fff;
`;
const Table = styled.div`width: 601px; flex: none;`;
const row4 = css`display: grid; grid-template-columns: 181px 180px 153px 87px;`;
const THead = styled.div`${row4} height: 28px; background: #f0f0f0; border-bottom: 1px solid #000; & > div { border-right: 1px solid #000; text-align: center; line-height: 27px; overflow: hidden; }`;
const TBRow = styled.div`
  ${row4} height: ${p => p.$h || 24}px; border-bottom: 1px dotted #777;
  & > div { border-right: 1px dotted #777; line-height: 22px; padding-left: 2px; overflow: hidden; white-space: nowrap; }
`;
const Band = styled.div`
  height: 26px; margin-top: 3px; background: #99b3d1; font-weight: 700; color: #0a0a0a; display: flex; align-items: center;
  justify-content: space-between; padding: 0 6px 2px 2px; & > svg { margin-bottom: 8px; }
`;
const TScroll = styled.div`flex: 1; background: #f0f0f0; display: flex; flex-direction: column; align-items: center; padding: 7px 1px 7px;`;
const TThumb = styled.div`width: 19px; height: 319px; background: #cdcdcd; margin: auto 0 7px;`;
const Tools = styled.div`display: flex; align-items: center; margin: 15px 0 0 16px; height: 28px; flex: none;`;
const ToolIc = styled.div`margin-right: ${p => p.$r}px;`;
const DLink = styled(Link)`font-size: 12px; margin: 9px 0 0 12px; height: 14px; line-height: 20px;`;
const DBtns = styled.div`display: flex; gap: 9px; justify-content: flex-end; padding-right: 8px; margin-top: -7px;`;
const Grip = styled.div`display: flex; justify-content: flex-end; padding: 2px 2px 0 0;`;

const Ink = styled.svg`position: absolute; left: 0; top: 0; pointer-events: none;`;

const Chev = ({ down, c = '#333' }) => (
  <svg width="10" height="6" viewBox="0 0 10 6" fill="none" stroke={c} strokeWidth="1.400"><path d={down ? 'M1 .500l4 4 4-4' : 'M1 5.500l4-4 4 4'} /></svg>
);
const Dbl = ({ down }) => (
  <svg width="6" height="9" viewBox="0 0 6 9" fill="none" stroke="#111" strokeWidth="1.400"><path d={down ? 'M.500 1l2.500 2.500L5.500 1M.500 5l2.500 2.500L5.500 5' : 'M.500 4L3 1.500 5.500 4M.500 8L3 5.500 5.500 8'} /></svg>
);
const GripDots = () => (
  <svg width="12" height="12" viewBox="0 0 12 12" fill="#b5b5b5"><path d="M9 0h3v3H9zM4.500 4.500h3v3h-3zM9 4.500h3v3H9zM0 9h3v3H0zM4.500 9h3v3h-3zM9 9h3v3H9z" /></svg>
);

/* ---------- data ---------- */
const quick = [
  [8, I.revit], [11, I.win], [14, I.newdoc], [10, I.open], [9, I.save], [10, I.cloud], [9, <Tri />], [9, I.undo], [9, <Tri />],
  [11, I.redo], [8, <Tri />], [10, I.print], [9, 'sep'], [8, I.meas], [10, <Tri />], [9, I.dim], [11, I.tag], [12, I.letterA],
  [12, 'sep'], [8, I.house], [11, <Tri />], [9, I.section], [0, 'thin'], [5, 'sep'], [8, I.closeh], [8, I.switchw], [7, <Tri />], [11, I.custom],
];
const tabs = [['Arquivo', 51, 74, 'file'], ['Criar', 31, 59], ['Inserir', 40, 62], ['Anotar', 45, 71], ['Vista', 31, 56], ['Gerenciar', 63, 86],
  ['Suplementos', 86, 113], ['Quantification', 94, 116], ['BIM Interoperability Tools', 171, 198], ['Modificar', 64, 86, 'active']];
const propGroups = [
  ['Restrições', 67, [['Hospedeiro', 77, '', 0, 1]]],
  ['Estrutural', 61, [['Arredondamento do com...', 178, '0.1', 18, 0, 1], ['Forma do corte', 102, 'Forma I do flange parale...', 173], ['Material para o comporta...', 180, 'Aço', 26], ['Exportar sempre como ge...', 181, 'off']]],
  ['Dados de identidade', 139, [['Nome do código', 114, 'BS 5950-1:2000', 102], ['Número OmniClass', 127, ''], ['Título OmniClass', 111, '', 0, 1]]],
  ['Outros', 44, [['Sempre na vertical', 123, 'on'], ['Corte com vazios quando ...', 182, 'off'], ['Representação simbólica', 166, 'Das configurações de proj...', 183], ['Compartilhado', 100, 'off'], ['Exibir o pré-corte da famíl...', 184, 'on']]],
];
const paramsA = [
  ['Eixo forte do módulo de e', 175, '560.00 cm³', 72], ['Eixo fraco do módulo de e', 176, '92.60 cm³', 65], ['Eixo forte do módulo plást', 178, '623.00 cm³', 72],
  ['Eixo fraco do módulo plás', 175, '142.00 cm³', 72], ['Momento de inércia de tor', 177, '14.70 cm⁴', 64], ['Módulo de torção', 119], ['Constante da empena', 144, '164000.000 cm⁶', 104],
  ['Eixo forte da área de cisal', 171], ['Eixo fraco da área de cisal', 173], ['Ângulo dos eixos principai', 176, '', 0, '=', 0, 'box'],
];
const paramsB = [
  ['Largura', 49, '230.0 mm', 64], ['Altura', 39, '460.0 mm', 64], ['Espessura do flange', 132, '25.0 mm', 56], ['Espessura da teia', 113, '13.0 mm', 56],
  ['Concordância da teia', 140, '13.0 mm', 56], ['Centróide horizontal', 135, '115.0 mm', 64, '=Largura / 2', 80], ['Centróide vertical', 116, '230.0 mm', 64, '=Altura / 2', 71],
];
/* [label, width, level, marker, outer rail, inner rail] */
const tree = [
  ['Vistas (todas)', 88, 0, I.tviews], ['Plantas de piso', 101, 1, '-', 1], ['Nível de referência', 125, 2, '', 1, 'end'], ['Plantas de forro', 106, 1, '-', 1],
  ['Nível de referência', 125, 2, '', 1, 'end'], ['Vistas 3D', 60, 1, '-', 1], ['{3D}', 28, 2, '', 1, 'end'], ['Elevações (Elevação 1)', 149, 1, '-', 'end'],
  ['Direita', 46, 2, '', 0, 1], ['Esquerda', 61, 2, '', 0, 1], ['Parte frontal', 81, 2, '', 0, 1], ['Parte posterior', 97, 2, '', 0, 'end'],
  ['Folhas (todas)', 93, 0, I.tsheet], ['Famílias', 53, 0, I.tfam], ['Perfis', 35, 1, '-', 1], ['HP-Pilar de arrimo-Perfil-Alto', 195, 2, '+', 1, 1],
  ['HP-Pilar de arrimo-Perfil-Médio', 211, 2, '+', 1, 'end'], ['Símbolos de anotação', 149, 1, '+', 1], ['Vínculos analíticos', 125, 1, '+', 'end'],
  ['Grupos', 48, 0, I.tgroup], ['Vínculos do Revit', 116, 0, I.tlink],
];

/* ---------- sections ---------- */
function TopBar() {
  return (
    <TitleBar>
      {quick.map(([gap, ic], i) => (ic === 'sep' ? <Split key={i} $gap={gap} /> : ic === 'thin' ? <ThinBtn key={i}>{I.thin}</ThinBtn> : <Slot key={i} $gap={gap}>{ic}</Slot>))}
      <WinTitle $gap={188}><T w={422}>Autodesk Revit 2022 - UB-Vigas universais.rfa - Elevação: Direita</T></WinTitle>
      <Slot $gap={186}><svg width="6" height="9"><path d="M6 0v9L0 4.500z" fill="#333" /></svg></Slot>
      <Slot $gap={10}>{I.binoc}</Slot>
      <Slot $gap={10}>{I.user}</Slot>
      <Slot $gap={7}><T w={101}>ffribeiro@gm...</T></Slot>
      <Slot $gap={4}><Tri /></Slot>
      <Slot $gap={13}>{I.cart}</Slot>
      <Split $gap={11} />
      <Slot $gap={11}><HelpDot>?</HelpDot></Slot>
      <Slot $gap={10}><Tri /></Slot>
      <Slot $gap={82}><svg width="10" height="14"><rect y="11" width="10" height="3" fill="#222" /></svg></Slot>
      <Slot $gap={19}>{I.restore}</Slot>
      <Slot $gap={16}>{I.close}</Slot>
    </TitleBar>
  );
}

function RibbonArea() {
  return (
    <>
      <TabBar>
        {tabs.map(([t, w, tw, k]) => <Tab key={t} $w={tw} $file={k === 'file'} $active={k === 'active'} ><T w={w}>{t}</T></Tab>)}
        <TabToggle><svg width="7" height="4"><path d="M0 4h7L3.500 0z" fill="#444" /></svg></TabToggle>
        <TabArrow><Tri w={7} h={5} /></TabArrow>
      </TabBar>
      <Ribbon>
        <Panel $w={101}>
          <PanelBody $pad="13px 0 0 1px"><Col $w={100} $gap={12}>{I.cursor}<Dim><T w={64}>Modificar</T></Dim></Col></PanelBody>
          <PanelName><T w={69}>Selecionar</T><Tri w={9} h={6} /></PanelName>
        </Panel>
        <Panel $w={104}>
          <PanelBody $pad="7px 0 0 7px">
            <IconGrid $n={2} $c={49} $r={44}>{I.cubes}{I.typefold}<PalBtn>{I.proppal}</PalBtn>{I.typegrid}</IconGrid>
          </PanelBody>
          <PanelName><T w={87}>Propriedades</T></PanelName>
        </Panel>
        <Panel $w={154}>
          <PanelBody>
            <Col $w={122} $gap={8}>{I.paste}<Dim><T w={34}>Colar</T></Dim><Tri c="#777" /></Col>
            <IconGrid $n={1} $c={20} $r={31}>{I.scissors}{I.copydoc}{I.brush}</IconGrid>
          </PanelBody>
          <PanelName><T w={140}>Área de transferência</T></PanelName>
        </Panel>
        <Panel $w={149}>
          <PanelBody $pad="25px 0 0 7px">
            <Col $w={96} $gap={10} $align="flex-start">
              <Dim $gap={5}>{I.cutg}<T w={41}>Cortar</T><span /><Tri c="#666" /></Dim>
              <Dim $gap={5}>{I.joing}<T w={27}>Unir</T><span /><Tri c="#666" /></Dim>
            </Col>
            <Col $w={45} $gap={10} $align="flex-start"><Dim>{I.solid}</Dim><Dim $gap={8}>{I.geo2}<Tri c="#666" /></Dim></Col>
          </PanelBody>
          <PanelName><T w={69}>Geometria</T></PanelName>
        </Panel>
        <Panel $w={299}>
          <PanelBody $pad="8px 0 0 8px">
            <IconGrid $n={4} $c={49.5} $r={43}>{I.align}{I.offset}{I.mirror}{I.mirror2}{I.move}{I.copy}{I.rotate}{I.trim}</IconGrid>
            <IconGrid $n={3} $c={31.5} $r={31}>{I.split}{I.split2}{I.unpin}{I.array}{I.scale}{I.pin}{I.trim1}{I.trim2}{I.del}</IconGrid>
          </PanelBody>
          <PanelName />
        </Panel>
        <Panel $w={70}>
          <PanelBody $pad="14px 0 0 6px">
            <Col $w={62} $gap={14} $align="flex-start"><Dim $gap={12}>{I.ruler}<Tri c="#666" /></Dim><Dim $gap={11}>{I.aligned}<Tri c="#666" /></Dim></Col>
          </PanelBody>
          <PanelName />
        </Panel>
        <Panel $w={56} $open>
          <PanelBody $pad="8px 0 0 7px"><IconGrid $n={1} $c={38} $r={43}>{I.group}{I.similar}</IconGrid></PanelBody>
          <PanelName><T w={30}>Criar</T></PanelName>
        </Panel>
        <Panel $w={202} $open>
          <PanelBody $pad="8px 0 0 0">
            <Col $w={87} $gap={7}>{I.load}<Lines><T w={78}>Carregar no</T><T w={49}>projeto</T></Lines></Col>
            <Col $w={114} $gap={7}>{I.loadx}<Lines><T w={78}>Carregar no</T><T w={106}>projeto e fechar</T></Lines></Col>
          </PanelBody>
          <PanelName $bg="#c5c6e0"><T w={111}>Editor de família</T></PanelName>
        </Panel>
      </Ribbon>
      <Options />
    </>
  );
}

function Tick() {
  return <svg width="14" height="14" viewBox="0 0 14 14" fill="none" stroke="#333" strokeWidth="1.400"><path d="M2 7.500l3 3 7-6" /></svg>;
}

function Properties() {
  return (
    <Props>
      <PalHead $pad={2}><T w={87}>Propriedades</T></PalHead>
      <TypeBox>
        <Thumb>
          <svg width="45" height="54" viewBox="0 0 46 50" preserveAspectRatio="none"><path d="M2 2l8-2v46l-8 2z" fill="#7b7b7b" /><path d="M6 0h14c12 0 17 7 17 14s-4 12-9 14l17 20H32L20 30h-4v16l-10 2z" fill="#999" /><path d="M15 10h6c4 0 6 2 6 5s-2 6-6 6h-6z" fill="#ececec" /><path d="M20 30l8-2 17 20H32z" fill="#adadad" /></svg>
        </Thumb>
        <Tri w={9} h={5} c="#777" />
      </TypeBox>
      <FamRow>
        <FamCombo><T w={172}>Família: Quadro estrutural</T><Chev down /></FamCombo>
        <EditType>{I.edit}<T w={69}>Editar tipo</T></EditType>
      </FamRow>
      <Grid>
        {propGroups.map(([name, w, rows]) => (
          <React.Fragment key={name}>
            <GHead><T w={w}>{name}</T><Dbl /></GHead>
            {rows.map(([n, nw, v, vw, off, edit]) => (
              <GRow key={n} $off={off}>
                <GName><T w={nw}>{n}</T></GName>
                <GVal $edit={edit}>
                  {v === 'on' ? <Check><Tick /></Check> : v === 'off' ? <Check /> : v && <T w={vw}>{v}</T>}
                </GVal>
              </GRow>
            ))}
          </React.Fragment>
        ))}
      </Grid>
      <HelpBar><Link><T w={154}>Ajuda de propriedades</T></Link><ApplyOff><T w={46}>Aplicar</T></ApplyOff></HelpBar>
    </Props>
  );
}

const GREEN = '#0f6415';
const dimText = { fontFamily: '"Liberation Sans", Arial, sans-serif', fontSize: 32.5, fill: '#000' };
function Drawing() {
  return (
    <svg width="1121" height="743" viewBox="397 243 1121 743" shapeRendering="crispEdges" fill="none" stroke="#000" strokeWidth="1">
      <g stroke={GREEN} strokeWidth="1">
        <path d="M703.500 372.600V853M799.500 372.600V853" strokeDasharray="17.400 17.900" />
        <path d="M508 533.500H921M508 724.500H921" strokeDasharray="17.200 18.100" />
        <path d="M625 629.500h21" /><path d="M663 629.500H921" strokeDasharray="17.600 17.700" />
        <path d="M654 544.500h16M687 544.500h26M734 544.500h12M757 544.500h18M791 544.500h28" />
        <path d="M754.500 486v17M754.500 521v12M751.500 504v11M751.500 521V726M748.500 540v175M754.500 548v14M754.500 580v120" />
      </g>
      <rect x="587" y="520" width="38" height="215" fill="#fff" stroke="none" />
      <rect x="584" y="736" width="337" height="34" fill="#fff" stroke="none" />
      <g stroke="#8b8b8b"><path d="M703.500 533v11.500h45V714.500h-45V724M799.500 533v11.500h-45V714.500h45V724" /></g>
      <path d="M704 533.500h95M703 724.500h97M751.500 545v30M751.500 620v24M751.500 660v40" />
      <path d="M720 533.500h16M764 533.500h14M720 724.500h16M764 724.500h14M687 544.500h26M734 544.500h12M791 544.500h28" stroke={GREEN} />
      <path d="M486.500 533.500v191M483 533.500h27M483 724.500h27M471 518l31 31M480 718l22 22" />
      <path d="M631.500 533v11M625 533.500h12M631.500 544.500h23M625 527l22 21M625 535l22 23" />
      <path d="M748.500 771v33M754.500 771v33M748 782.500h6M733 796l26-25M739 796l25-25M748.500 730v4M754.500 730v4" />
      <path d="M703.500 861v19M706 880l13-11M799.500 861v19M802 880l12-11" />
      <g stroke="none" shapeRendering="auto">
        <text {...dimText} transform="translate(472 717.500) rotate(-90)" textLength="177">Altura = 460</text>
        <text {...dimText} transform="translate(617 725) rotate(-90)" textLength="373">Espessura do flange = 25</text>
        <text {...dimText} x="582" y="764" textLength="337">Espessura da teia = 13</text>
        <text {...dimText} x="648" y="910" textLength="206">Largura = 230</text>
      </g>
    </svg>
  );
}

function Viewport() {
  return (
    <Center>
      <DocTabs>
        <DocTab $w={480}>{I.vhouse}<T w={27}>{'{3D}'}</T></DocTab>
        <DocTab $w={60}>{I.vsheet}<T>N</T></DocTab>
      </DocTabs>
      <CanvasRow><Drawing /><VScroll><Chev down /></VScroll></CanvasRow>
      <ViewBar>
        <T w={34}>1 : 24</T>
        <ViewIcons>{I.v1}{I.v2}{I.v3}{I.v4}{I.v5}{I.v6}{I.v7}</ViewIcons>
        <svg width="7" height="11" fill="none" stroke="#333" strokeWidth="1.800"><path d="M6 1L1.500 5.500 6 10" /></svg>
        <HThumb />
        <Slot $gap={403}><svg width="7" height="11" fill="none" stroke="#333" strokeWidth="1.800"><path d="M1 1l4.500 4.500L1 10" /></svg></Slot>
        <Slot $gap={15}><GripDots /></Slot>
      </ViewBar>
    </Center>
  );
}

function TreeRow({ row }) {
  const [label, w, level, mark, outer, inner] = row;
  if (level === 0) return <TRow><IconCell>{mark}</IconCell><TLabel><T w={w}>{label}</T></TLabel></TRow>;
  return (
    <TRow>
      <Rail $ml={35} $run={outer} />
      {level === 2 && <Rail $ml={26} $run={inner} />}
      {mark && (
        <Box><svg width="9" height="9" stroke="#34558b" strokeWidth="1.200"><path d={mark === '+' ? 'M0 4.500h9M4.500 0v9' : 'M0 4.500h9'} /></svg></Box>
      )}
      <Dash $w={mark ? 12 : 19} />
      <TLabel $on={label === 'Direita'}><T w={w}>{label}</T></TLabel>
    </TRow>
  );
}

function ProjectBrowser() {
  return (
    <Browser>
      <PalHead $pad={5}><T w={308}>Navegador de projeto - UB-Vigas universais.rfa</T></PalHead>
      <Tree>{tree.map((r, i) => <TreeRow key={i} row={r} />)}</Tree>
    </Browser>
  );
}

function ParamRow({ r }) {
  const [n, nw, v, vw, f = '=', fw, b] = r;
  return (
    <TBRow>
      <div><T w={nw}>{n}</T></div><div>{v && <T w={vw}>{v}</T>}</div><div><T w={fw}>{f}</T></div>
      <div>{b && <Check $mt={3} />}</div>
    </TBRow>
  );
}

function FamilyTypes() {
  return (
    <Dialog $x={921} $y={171} $w={651} $h={769} $bd="#a5a5a5">
      <DTitle $h={36} $pl={9} $pr={15} $c="#9a9a9a"><T w={113}>Tipos de famílias</T><svg width="13" height="13" stroke="#8d8d8d"><path d="M.500.500l12 12M12.500.500l-12 12" /></svg></DTitle>
      <FRow>
        <T w={82}>Digite o nome:</T>
        <FCombo><T w={78}>viga_principal</T><Chev down /></FCombo>
        <FIcons>{I.dnew}{I.ai}{I.ddel}</FIcons>
      </FRow>
      <Search><T w={138}>Parâmetros de pesquisa</T>{I.mag}</Search>
      <TableWrap>
        <Table>
          <THead><div><T w={68}>Parâmetro</T></div><div><T w={35}>Valor</T></div><div><T w={53}>Fórmula</T></div><div><T w={59}>Bloquear</T></div></THead>
          {paramsA.map((r, i) => <ParamRow key={i} r={r} />)}
          <Band><T w={207}>Geometria do corte estrutural</T><Dbl /></Band>
          {paramsB.map((r, i) => <ParamRow key={i} r={r} />)}
          <Band><T w={142}>Dados de identidade</T><Dbl down /></Band>
          <TBRow $h={40}><div /><div /><div /><div /></TBRow>
        </Table>
        <TScroll><Chev /><TThumb /><Chev down /></TScroll>
      </TableWrap>
      <Tools>
        <ToolIc $r={15}>{I.pencil}</ToolIc><ToolIc $r={15}>{I.dnew}</ToolIc><ToolIc $r={15}>{I.ddelg}</ToolIc><ToolIc $r={15}>{I.up}</ToolIc>
        <ToolIc $r={33}>{I.down}</ToolIc><ToolIc $r={17}>{I.az}</ToolIc><ToolIc $r={181}>{I.za}</ToolIc>
        <Btn $w={198}><T w={184}>Gerenciar tabelas de pesquisa...</T></Btn>
      </Tools>
      <DLink><T w={260}>Como posso gerenciar meus tipos de família?</T></DLink>
      <DBtns>
        <Btn $w={89}><T w={16}>OK</T></Btn><Btn $w={89}><T w={50}>Cancelar</T></Btn><Btn $w={89}><T w={39}>Aplicar</T></Btn>
      </DBtns>
      <Grip><GripDots /></Grip>
    </Dialog>
  );
}

function NameDialog() {
  return (
    <Dialog $x={532} $y={164} $w={350} $h={159} $bd="#6a6a6a">
      <DTitle $h={37} $pl={9} $pr={15} $c="#111"><T w={41}>Nome</T><svg width="13" height="13" stroke="#111" strokeWidth="1.300"><path d="M.500.500l12 12M12.500.500l-12 12" /></svg></DTitle>
      <NRow><T w={37}>Nome:</T><NInput><Sel><T w={36}>Tipo 3</T></Sel></NInput></NRow>
      <NLine />
      <NBtns><Btn $w={103} $def><T w={16}>OK</T></Btn><Btn $w={103}><T w={50}>Cancelar</T></Btn></NBtns>
    </Dialog>
  );
}

function Annotations() {
  return (
    <Ink width="1920" height="1080" viewBox="0 0 1920 1080" fill="none" stroke="#ad1562" strokeWidth="5.800" strokeLinecap="round" strokeLinejoin="round">
      <path d="M1460 76.500C1470 73 1480 62 1486 51C1481 65 1478 80 1477 94M1458.500 100L1491 98.500" />
      <path d="M1474.500 192C1476 165 1474 140 1476 108M1473.500 106C1468 115 1458 124 1451 131.500M1473.500 106L1496 131M1455 130H1494" />
      <path d="M1450 196.500C1465 192 1480 192 1495 195Q1505 198 1505.500 203L1506 238L1503 265L1480 263.500L1449 264.500L1446.500 247L1449.500 207" />
      <path d="M724.500 62.700C736 59 744 61 743.500 66C744 78 733 88 731.500 97L784 100" />
      <path d="M637.500 184C652 158 655 130 678 117C692 107 702 96 714 92M675 95C688 95 705 94 714 92C712 103 710 112 708 122C697 115 684 105 675 95" />
      <path d="M590.500 200H678Q682 200 682 205V215C679 232 681 248 679.500 262C662 262 640 261 634 260.500C615 258 600 258 582 258.500C578 253 579 225 576 208" />
      <path d="M817 386.500C790 390 765 390 745 384C725 379 710 355 704 338M704.500 322C698 333 692 346 688.600 357.500C703 358 718 351 732 343C722 334 712 328 704.500 322M700 350L706 334M706 324L722 334" />
      <path d="M832 361C845 360 853 356 862 357.700C862 363 854 368 849 371.500C866 370 874 380 872 392C869 407 845 414 824 410" />
      <path d="M922 586L1105 586L1231 588Q1296 589 1297 594C1294 620 1289 640 1291 654V726H1147C1060 724 1000 726 978 724C955 719 945 720 928.500 718C930 670 926 640 926 598" />
      <path d="M1233.500 587C1250 568 1256 545 1272 525C1290 500 1320 498 1370 485M1328 467.500C1347 470 1360 474 1372.500 482C1370 496 1357 507 1350 520M1328 467.500C1338 485 1342 505 1348 521M1337 478L1340 500" />
      <path d="M1403 500L1407 443C1400 453 1392 460 1383 467.500Q1398 471 1425 470.500" />
      <path d="M1732 883C1690 887 1660 897 1632 896.500L1573 896.500M1583 868C1580 880 1571 885 1569 896V908C1580 911 1588 917 1594.500 923M1583 868C1584 890 1586 910 1586.500 927" />
      <path d="M1797.500 848C1785 844 1776 839 1769 840Q1766 855 1768 869C1778 865 1785 864 1796 865C1802 877 1805 888 1804 896C1800 907 1790 908 1776.500 909" />
      <path d="M1110.500 946C1100 950 1099 956 1099 961C1096 974 1105 977 1121 977C1125 965 1118 962 1099 961.500" />
      <path d="M1146 974.500C1190 980 1225 979 1266 979C1280 974 1302 960 1307 943M1280 937.500C1295 936 1305 929 1320 927.500C1322 938 1322 948 1324 957.500C1312 951 1302 946 1285 939M1299 940L1318 934" />
    </Ink>
  );
}

const apps = [
  [taskIcons.store], [taskIcons.spotify], [taskIcons.edge], [taskIcons.mendeley], [taskIcons.explorer, 1], [taskIcons.firefox, 1], [taskIcons.vscode, 1], [taskIcons.cubes3],
  [<Badge $bg="#111" $c="#fff" $b="1.500px solid #eff05a" $s={10} $lh={12}>PC</Badge>], [<Badge $bg="#e9f1fa" $c="#2a66a8" $s={17}>R</Badge>, 1, 1],
  [taskIcons.rhino], [<Badge $bg="#6ea6dc" $c="#fff" $r="50%" $s={14} $f='"Liberation Serif", serif'>R</Badge>], [<Badge $bg="#f8e9e6" $c="#b3282d" $s={18}>A</Badge>],
  [taskIcons.navis], [taskIcons.blender], [taskIcons.photos, 1],
];

export default function App() {
  return (
    <>
      <Global />
      <Screen>
        <TopBar />
        <RibbonArea />
        <Body><Properties /><Viewport /><ProjectBrowser /></Body>
        <Status>
          <T w={43}>Pronto</T>
          <StatusIcons>{I.s1}{I.s2}{I.s3}{I.s4}{I.s5}{I.s6}{I.funnel}<Count><T w={11}>:0</T></Count></StatusIcons>
        </Status>
        <Taskbar>
          <StartBtn>{taskIcons.start}</StartBtn>
          <AppStrip>{apps.map(([ic, run, act], i) => <AppCell key={i} $run={run} $act={act}>{ic}</AppCell>)}</AppStrip>
          <Tray>
            <TrayCell>{taskIcons.gdrive}</TrayCell><TrayCell>{taskIcons.search}</TrayCell><TrayCell>{taskIcons.bars}</TrayCell><TrayCell>{taskIcons.nvidia}</TrayCell>
            <TrayCell>{taskIcons.bt}</TrayCell><TrayCell>{taskIcons.pen}</TrayCell><TrayCell>{taskIcons.onedrive}</TrayCell><TrayCell>{taskIcons.cloudw}</TrayCell>
            <TrayCell>{taskIcons.batt}</TrayCell><TrayCell>{taskIcons.net}</TrayCell><TrayCell>{taskIcons.vol}</TrayCell>
            <TrayCell $w={44}><T w={28}>POR</T></TrayCell><TrayCell $w={53}><T w={34}>15:26</T></TrayCell><TrayCell $w={46}>{taskIcons.notif}</TrayCell>
          </Tray>
        </Taskbar>
        <FamilyTypes />
        <NameDialog />
        <Annotations />
      </Screen>
    </>
  );
}
